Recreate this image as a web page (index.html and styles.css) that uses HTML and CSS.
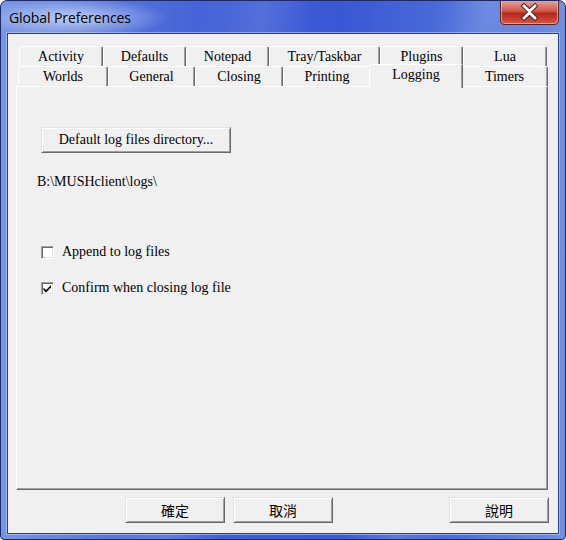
FILE: index.html
```html
<!DOCTYPE html>
<html>
<head>
<meta charset="utf-8">
<link rel="stylesheet" href="styles.css">
</head>
<body>
<div class="window">
  <div class="titlebar">
    <span class="title">Global Preferences</span>
    <div class="close">
      <svg width="59" height="25" viewBox="0 0 59 25">
        <defs>
          <linearGradient id="cg" x1="0" y1="0" x2="0" y2="1">
            <stop offset="0" stop-color="#e8a89e"/>
            <stop offset="0.45" stop-color="#d0584a"/>
            <stop offset="0.55" stop-color="#b8271c"/>
            <stop offset="1" stop-color="#d8584a"/>
          </linearGradient>
        </defs>
        <path d="M0.5 0 V20 Q0.5 24.5 5 24.5 H54 Q58.5 24.5 58.5 20 V0" fill="url(#cg)" stroke="#5a2420" stroke-width="1"/>
        <path d="M1.5 0 V20 Q1.5 23.5 5 23.5 H54 Q57.5 23.5 57.5 20 V0" fill="none" stroke="rgba(255,220,210,0.55)" stroke-width="1"/>
        <path d="M24 6 L29.5 11.2 L35 6 M24 18 L29.5 12.8 L35 18" fill="none" stroke="#3a1a18" stroke-width="4.6" stroke-linecap="square"/>
        <path d="M24 6 L29.5 11.2 L35 6 M24 18 L29.5 12.8 L35 18" fill="none" stroke="#ffffff" stroke-width="2.8" stroke-linecap="square"/>
      </svg>
    </div>
  </div>
  <div class="client">
    <div class="tabs">
      <div class="row row1">
        <div class="tab w84">Activity</div>
        <div class="tab w83">Defaults</div>
        <div class="tab w83">Notepad</div>
        <div class="tab w111">Tray/Taskbar</div>
        <div class="tab w83">Plugins</div>
        <div class="tab w84">Lua</div>
      </div>
      <div class="row row2">
        <div class="tab w90">Worlds</div>
        <div class="tab w87">General</div>
        <div class="tab w88">Closing</div>
        <div class="tab w88">Printing</div>
        <div class="tab selected">Logging</div>
        <div class="tab w87">Timers</div>
      </div>
    </div>
    <div class="panel">
      <button class="btn dirbtn">Default log files directory...</button>
      <div class="path">B:\MUSHclient\logs\</div>
      <div class="check first"><span class="box"></span><span>Append to log files</span></div>
      <div class="check second"><span class="box"><svg width="11" height="11" viewBox="0 0 11 11"><path d="M1.5 4.5 L4 7 L9 2 V4.5 L4 9.5 L1.5 7 Z" fill="#000"/></svg></span><span>Confirm when closing log file</span></div>
    </div>
    <div class="footer">
      <button class="btn cjk ok">確定</button>
      <button class="btn cjk cancel">取消</button>
      <button class="btn cjk help">說明</button>
    </div>
  </div>
</div>
</body>
</html>
```

FILE: styles.css
```css
html, body {
  margin: 0;
  padding: 0;
  background: #ffffff;
}

.window {
  width: 566px;
  height: 540px;
  box-sizing: border-box;
  border: 1px solid #1c2a66;
  border-radius: 7px 7px 4px 4px;
  display: flex;
  flex-direction: column;
  overflow: hidden;
  background:
    radial-gradient(ellipse 95px 20px at 72px 17px, rgba(255,255,255,0.6), rgba(255,255,255,0) 100%),
    linear-gradient(100deg, rgba(255,255,255,0) 30%, rgba(255,255,255,0.12) 40%, rgba(255,255,255,0) 48%, rgba(255,255,255,0) 66%, rgba(255,255,255,0.14) 74%, rgba(255,255,255,0) 82%),
    linear-gradient(to right, #7696e4 0%, #5878dc 18%, #3f5dd6 40%, #3a58d4 60%, #4b6cd9 80%, #7090e2 100%);
}

.titlebar {
  height: 32px;
  display: flex;
  justify-content: space-between;
  align-items: flex-start;
  flex-shrink: 0;
}

.title {
  font-family: "Open Sans", "Noto Sans", sans-serif;
  font-size: 14px;
  color: #000;
  margin: 7px 0 0 8px;
  letter-spacing: -0.1px;
}

.close {
  margin: -1px 6px 0 0;
  height: 25px;
}
.close svg { display: block; }

.client {
  flex: 1;
  margin: 0 6px 5px 6px;
  border: 1px solid #2c3f86;
  box-shadow: 0 0 0 1px rgba(190,205,245,0.6);
  background: #f0f0f0;
  display: flex;
  flex-direction: column;
  font-family: "Liberation Serif", "Times New Roman", serif;
  font-size: 14px;
  color: #000;
}

.tabs {
  margin: 12px 0 0 8px;
  position: relative;
  z-index: 1;
}

.row {
  display: flex;
  height: 20px;
}
.row1 { margin-left: 3px; }
.row2 { margin-left: 2px; }

.tab {
  box-sizing: border-box;
  height: 20px;
  background: #f0f0f0;
  border-top: 1px solid #ffffff;
  border-left: 1px solid #ffffff;
  border-right: 1px solid #696969;
  box-shadow: inset -1px 0 0 #a0a0a0;
  border-radius: 2px 2px 0 0;
  text-align: center;
  line-height: 19px;
}

.w83 { width: 83px; }
.w84 { width: 84px; }
.w87 { width: 87px; }
.w88 { width: 88px; }
.w90 { width: 90px; }
.w111 { width: 111px; }

.tab.selected {
  width: 94px;
  height: 24px;
  margin: -2px -2px -2px -2px;
  line-height: 20px;
  position: relative;
  z-index: 2;
}

.panel {
  box-sizing: border-box;
  width: 532px;
  height: 404px;
  margin-left: 8px;
  background: #f0f0f0;
  border-top: 1px solid #ffffff;
  border-left: 1px solid #ffffff;
  border-right: 1px solid #696969;
  border-bottom: 1px solid #696969;
  box-shadow: inset -1px -1px 0 #a0a0a0;
  padding: 40px 0 0 20px;
  display: flex;
  flex-direction: column;
  align-items: flex-start;
}

.btn {
  box-sizing: border-box;
  background: #f0f0f0;
  border-top: 1px solid #e3e3e3;
  border-left: 1px solid #e3e3e3;
  border-right: 1px solid #696969;
  border-bottom: 1px solid #696969;
  box-shadow: inset 1px 1px 0 #ffffff, inset -1px -1px 0 #a0a0a0;
  font-family: "Liberation Serif", "Times New Roman", serif;
  font-size: 14px;
  color: #000;
  padding: 0;
  margin: 0;
  height: 26px;
}

.dirbtn {
  width: 190px;
  margin-left: 4px;
}

.path {
  margin-top: 20px;
  height: 18px;
  line-height: 18px;
}

.check {
  display: flex;
  align-items: center;
  margin-left: 4px;
  height: 18px;
}
.check.first { margin-top: 52px; }
.check.second { margin-top: 18px; }

.box {
  box-sizing: border-box;
  width: 13px;
  height: 13px;
  background: #ffffff;
  border-top: 1px solid #a0a0a0;
  border-left: 1px solid #a0a0a0;
  border-right: 1px solid #ffffff;
  border-bottom: 1px solid #ffffff;
  box-shadow: inset 1px 1px 0 #696969, inset -1px -1px 0 #e3e3e3;
  margin-right: 8px;
  display: flex;
  align-items: center;
  justify-content: center;
}
.box svg { display: block; }

.footer {
  display: flex;
  margin-top: 7px;
  padding-left: 117px;
}

.cjk {
  font-family: "Noto Sans CJK TC", "Noto Sans CJK SC", sans-serif;
  font-size: 14px;
  width: 100px;
  line-height: 22px;
}
.cancel { margin-left: 8px; }
.help { margin-left: 116px; }
```
